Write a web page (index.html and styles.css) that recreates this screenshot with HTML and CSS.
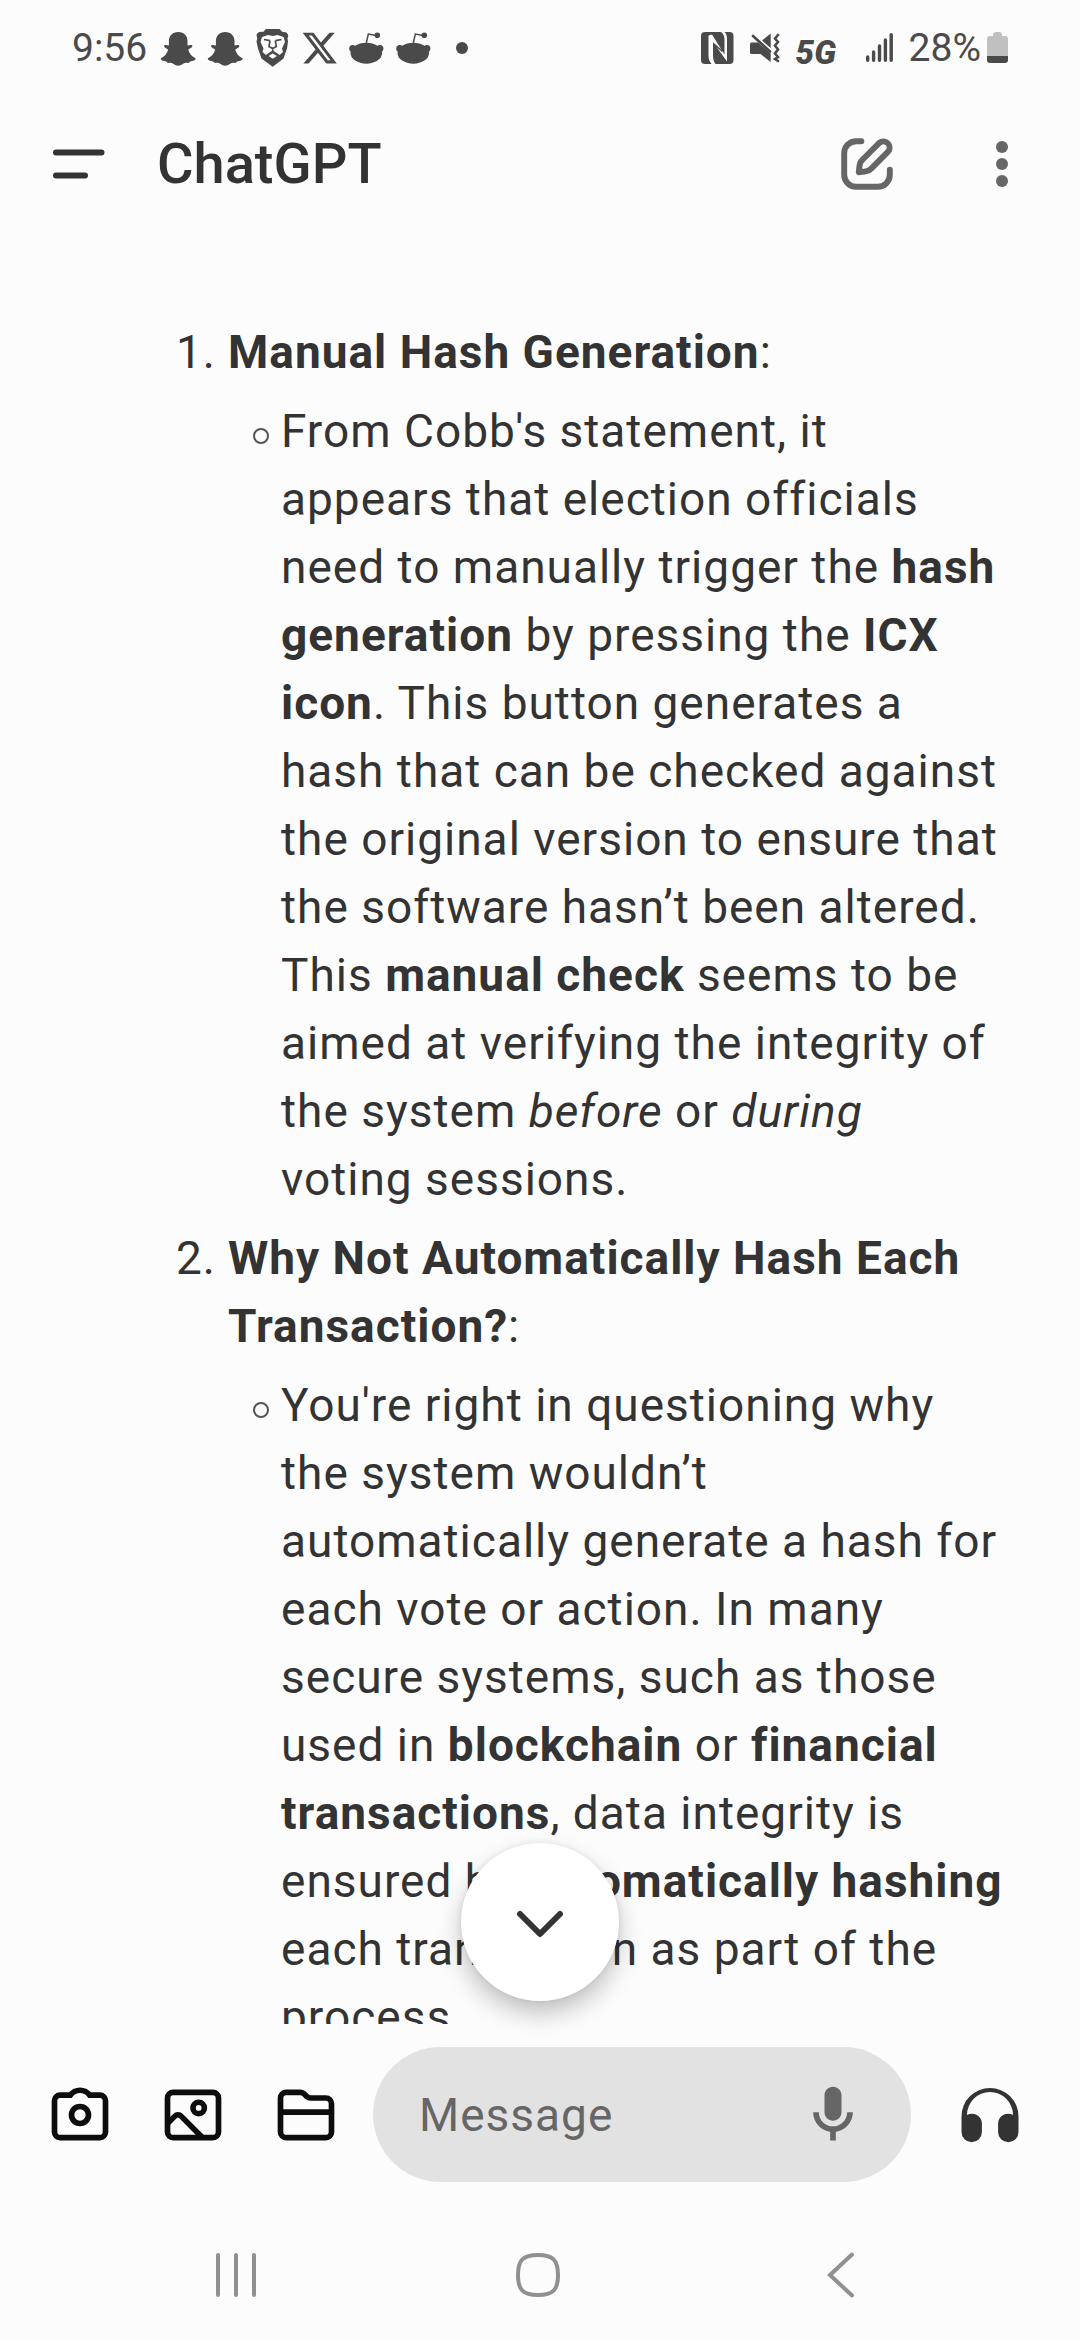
FILE: index.html
```html
<!DOCTYPE html>
<html lang="en">
<head>
<meta charset="utf-8">
<meta name="viewport" content="width=device-width, initial-scale=1">
<title>ChatGPT</title>
<link rel="stylesheet" href="styles.css">
</head>
<body class="screen">
  <div class="status">
    <div class="status-left">
      <span class="status-time">9:56</span>
      <svg class="note" viewBox="0 0 36 40" aria-hidden="true"><use href="#snap"/></svg>
      <svg class="note" viewBox="0 0 36 40" aria-hidden="true"><use href="#snap"/></svg>
      <svg class="note" viewBox="0 0 36 40" aria-hidden="true">
        <path fill="currentColor" d="M12 1h13.500l3 3c3-.5 5 .5 5.800 3.500l-.8 3 .5 3-1 7-3.500 10L18.700 38.700 7.500 30.500l-3.500-10-1.500-7 .8-3L2.500 7C3.500 4 6 3.500 9 4z"/>
        <path class="cut" d="M8 9l6-2 4.700 1L23.500 7l6 2 1.500 5-3 6.500 1 3.500-3.500 3-3.500-2.500-3.300-2-3.300 2L12 27l-3.500-3 1-3.500-3-6.500zM14.500 28l4.200-2.500L23 28l-4.300 2.800z"/>
        <path fill="none" stroke="currentColor" stroke-width="1.700" d="M10 11.500l6 1.200M27.500 11.500l-6 1.200M16 12.500l-1 6 3.700 2 3.600-2-1-6M18.700 20v4"/>
      </svg>
      <svg class="note" viewBox="0 0 36 40" aria-hidden="true"><path fill="currentColor" transform="translate(-.3 1.100) scale(1.580)" d="M18.244 2.250h3.308l-7.227 8.260 8.502 11.240H16.170l-5.214-6.817L4.990 21.750H1.680l7.730-8.835L1.254 2.250H8.080l4.713 6.231zm-1.161 17.520h1.833L7.084 4.126H5.117z"/></svg>
      <svg class="note" viewBox="0 0 36 40" aria-hidden="true"><use href="#reddit"/></svg>
      <svg class="note" viewBox="0 0 36 40" aria-hidden="true"><use href="#reddit"/></svg>
      <svg class="note" viewBox="0 0 36 40" aria-hidden="true"><circle cx="20" cy="20" r="6" fill="currentColor"/></svg>
    </div>
    <div class="status-right">
      <svg width="33" height="32" viewBox="0 0 33 32" aria-hidden="true">
        <rect width="32.500" height="32" rx="4" fill="currentColor"/>
        <path class="cut" d="M7.500 3.500l3.500-1 12.500 20V8c0-4-1-6-3.500-8h3.500c2 2 2.500 4 2.500 7v22.500L12 10v13c0 4 .5 6.500 2.500 9h-4c-2-2.500-3-5-3-8z"/>
        <path fill="none" stroke="currentColor" stroke-width="1.500" d="M13 12l8.500 7.500"/>
      </svg>
      <svg width="30" height="32" viewBox="0 0 30 32" aria-hidden="true">
        <path fill="currentColor" d="M1.500 10.500H8l12.700 11V30L10.500 22h-9Q0 22 0 20.500V12q0-1.500 1.500-1.500zM12 8.500L20.700 1.500V16z"/>
        <path fill="none" stroke="currentColor" stroke-width="2.600" stroke-linecap="round" d="M3 4l17 15.500M28 3l-3 3.500 3 3.500-3 3.500 3 4-3 4 3 3.500-3 2 3 2"/>
      </svg>
      <span class="status-net">5G</span>
      <svg width="27" height="32" viewBox="0 0 27 32" aria-hidden="true"><path fill="none" stroke="currentColor" stroke-width="3.400" stroke-linecap="round" d="M1.700 25v3.300M7.600 20v8.300M13.500 14v14.300M19.400 8v20.300M25.200 2.700v25.600"/></svg>
      <span class="status-battery">
        <span>28%</span>
        <svg width="21" height="32" viewBox="0 0 21 32" aria-hidden="true">
          <path fill="#c0c0c0" d="M6 3q0-3 3-3h3q3 0 3 3v1h3q3 0 3 3v17H0V7q0-3 3-3h3z"/>
          <path fill="currentColor" d="M0 24h21v4q0 3-3 3H3q-3 0-3-3z"/>
        </svg>
      </span>
    </div>
  </div>

  <header class="topbar">
    <button class="icon-btn" type="button" aria-label="Menu">
      <svg class="icon" viewBox="0 0 68 68"><path fill="none" stroke="currentColor" stroke-width="6" stroke-linecap="round" d="M11 22.500h45.500M11 45.500h29"/></svg>
    </button>
    <h1 class="title">ChatGPT</h1>
    <button class="icon-btn muted" type="button" aria-label="New chat">
      <svg class="icon" viewBox="0 0 24 24"><path fill="none" stroke="currentColor" stroke-width="2.100" stroke-linecap="round" stroke-linejoin="round" d="M10 3.950H8.200A4.250 4.250 0 0 0 3.950 8.200v7.600A4.250 4.250 0 0 0 8.200 20.050h7.600a4.250 4.250 0 0 0 4.250-4.250V14M9.100 14.900l.3-2.500a3 3 0 0 1 1-1.900l5.950-5.950a2.200 2.200 0 0 1 3.100 3.100L13.500 13.600a3 3 0 0 1-1.900 1z"/></svg>
    </button>
    <button class="icon-btn muted" type="button" aria-label="More options">
      <svg class="icon" viewBox="0 0 68 68"><g fill="currentColor"><circle cx="34" cy="17" r="6"/><circle cx="34" cy="34" r="6"/><circle cx="34" cy="51" r="6"/></g></svg>
    </button>
  </header>

  <main class="chat">
    <div class="scroll">
      <ol class="points">
        <li class="point">
          <p class="text"><strong>Manual Hash Generation</strong>:</p>
          <ul class="details">
            <li class="detail text">From Cobb's statement, it appears that election officials need to manually trigger the <strong>hash generation</strong> by pressing the <strong>ICX icon</strong>. This button generates a hash that can be checked against the original version to ensure that the software hasn’t been altered. This <strong>manual check</strong> seems to be aimed at verifying the integrity of the system <em>before</em> or <em>during</em> voting sessions.</li>
          </ul>
        </li>
        <li class="point">
          <p class="text"><strong>Why Not Automatically Hash Each Transaction?</strong>:</p>
          <ul class="details">
            <li class="detail text">You're right in questioning why the system wouldn’t<br>automatically generate a hash for each vote or action. In many secure systems, such as those used in <strong>blockchain</strong> or <strong>financial transactions</strong>, data integrity is ensured by <strong>automatically hashing</strong> each transaction as part of the process.</li>
          </ul>
        </li>
      </ol>
    </div>
    <button class="jump" type="button" aria-label="Scroll to bottom">
      <svg class="icon" viewBox="0 0 68 68"><path fill="none" stroke="currentColor" stroke-width="6" stroke-linecap="round" stroke-linejoin="round" d="M14 26l20 20 20-20"/></svg>
    </button>
  </main>

  <form class="composer">
    <div class="attach">
      <button class="icon-btn" type="button" aria-label="Camera">
        <svg class="icon line" viewBox="0 0 24 24"><path d="M5 5h3.600a4.200 4.200 0 0 1 6.800 0H19a2 2 0 0 1 2 2v11a2 2 0 0 1-2 2H5a2 2 0 0 1-2-2V7a2 2 0 0 1 2-2z"/><circle cx="12" cy="12" r="3"/></svg>
      </button>
      <button class="icon-btn" type="button" aria-label="Photo">
        <svg class="icon line" viewBox="0 0 24 24"><rect x="3" y="4" width="18" height="16" rx="2"/><circle cx="14" cy="9.500" r="2"/><path d="M3 15l2.600-2.600a1.500 1.500 0 0 1 2.200 0L15.400 20"/></svg>
      </button>
      <button class="icon-btn" type="button" aria-label="File">
        <svg class="icon line" viewBox="0 0 24 24"><path d="M5 4h5a2 2 0 0 1 1.400.6l.9.9a2 2 0 0 0 1.400.5H19a2 2 0 0 1 2 2v10a2 2 0 0 1-2 2H5a2 2 0 0 1-2-2V6a2 2 0 0 1 2-2zM3 11h18"/></svg>
      </button>
    </div>
    <div class="field">
      <input class="input" type="text" placeholder="Message" aria-label="Message">
      <button class="icon-btn muted" type="button" aria-label="Voice input">
        <svg class="icon" viewBox="0 0 24 24"><path fill="currentColor" d="M12 14c1.660 0 3-1.340 3-3V5c0-1.660-1.340-3-3-3S9 3.340 9 5v6c0 1.660 1.340 3 3 3zM17 11c0 2.760-2.240 5-5 5s-5-2.240-5-5H5c0 3.530 2.610 6.430 6 6.920V21h2v-3.080c3.390-.49 6-3.390 6-6.920z"/></svg>
      </button>
    </div>
    <button class="icon-btn" type="button" aria-label="Voice mode">
      <svg class="icon" viewBox="0 0 68 68"><path fill="currentColor" d="M5.500 35.500a28.500 28.500 0 0 1 57 0V51a10.200 10.200 0 0 1-20.400 0V42.500a10 10 0 0 1 14.900-8.500 23 23 0 0 0-46 0 10 10 0 0 1 14.900 8.500V51a10.200 10.200 0 0 1-20.400 0z"/></svg>
    </button>
  </form>

  <nav class="navbar" aria-label="System">
    <button class="nav-btn" type="button" aria-label="Recents"><svg class="nav-icon" viewBox="0 0 48 48"><path d="M6 4v40M24 4v40M42 4v40"/></svg></button>
    <button class="nav-btn" type="button" aria-label="Home"><svg class="nav-icon" viewBox="0 0 48 48"><path d="M24 4c15 0 20 5 20 20s-5 20-20 20S4 39 4 24 9 4 24 4z"/></svg></button>
    <button class="nav-btn" type="button" aria-label="Back"><svg class="nav-icon" viewBox="0 0 48 48"><path d="M35 3.500L13 24l22 20.500"/></svg></button>
  </nav>

  <svg class="defs" width="0" height="0" aria-hidden="true">
    <symbol id="snap" viewBox="0 0 36 40"><path fill="currentColor" d="M18.200 4c6 0 9.300 4 9.300 9v4.500c1.500-.3 3.500-1 4.700 0 .8 1.200-1 2.500-4 4.200 1.300 4 3.800 6.800 7.300 8.600.6 1.700-1.500 2.700-5.500 3.200-.5 1.500-1.500 1.500-4 1.300-3 0-4 3-7.800 3s-4.800-3-7.800-3c-2.500.2-3.500.2-4-1.300-4-.5-6.100-1.500-5.500-3.200 3.500-1.800 6-4.600 7.300-8.600-3-1.700-4.800-3-4-4.200 1.200-1 3.200-.3 4.700 0V13c0-5 3.300-9 9.300-9z"/></symbol>
    <symbol id="reddit" viewBox="0 0 36 40"><g fill="currentColor"><ellipse cx="18.300" cy="25.200" rx="15.700" ry="10.500"/><circle cx="4.700" cy="20.500" r="3.500"/><circle cx="31.900" cy="20.500" r="3.500"/><circle cx="29.300" cy="7.300" r="2.800"/></g><path fill="none" stroke="currentColor" stroke-width="1.500" d="M18.300 15l2-9 8 1.500"/></symbol>
  </svg>
</body>
</html>
```
FILE: styles.css
```css
* {
  box-sizing: border-box;
}

.screen {
  margin: 0;
  height: 100vh;
  display: flex;
  flex-direction: column;
  background: #fcfcfc;
  color: #333;
  font-family: Roboto, "Liberation Sans", sans-serif;
  font-size: 46px;
}

.defs {
  position: absolute;
}

button {
  padding: 0;
  border: 0;
  background: none;
  color: inherit;
}

svg {
  display: block;
  flex: none;
}

/* Status bar */
.status {
  flex: none;
  height: 96px;
  padding: 0 72px;
  display: flex;
  align-items: center;
  justify-content: space-between;
  color: #4a4a4a;
  font-size: 39px;
}

.status-left {
  display: flex;
  align-items: center;
  gap: 11px;
}

.status-time {
  margin-right: 2px;
}

.note {
  width: 36px;
  height: 40px;
}

.cut {
  fill: #fcfcfc;
}

.status-right {
  display: flex;
  align-items: center;
  gap: 16px;
}

.status-net {
  width: 54px;
  padding-top: 8px;
  font-size: 33px;
  font-weight: 900;
  font-style: italic;
}

.status-battery {
  display: flex;
  align-items: center;
  gap: 6px;
}

/* App bar */
.topbar {
  flex: none;
  height: 136px;
  padding: 0 44px 0 45px;
  display: flex;
  align-items: center;
}

.icon-btn {
  flex: none;
  width: 68px;
  height: 68px;
}

.icon {
  width: 68px;
  height: 68px;
}

.muted {
  color: #666;
}

.title {
  flex: 1;
  margin: 0 0 0 44px;
  font-size: 56px;
  font-weight: 500;
}

.topbar .muted + .muted {
  margin-left: 67px;
}

/* Conversation */
.chat {
  position: relative;
  flex: 1;
  min-height: 0;
}

.scroll {
  height: 100%;
  padding: 86px 75px 0 176px;
  overflow: hidden;
}

.text {
  margin: 0;
  line-height: 68px;
  letter-spacing: 1px;
}

.points,
.details {
  margin: 0;
  padding: 0;
  list-style: none;
  display: grid;
  gap: 11px;
}

.points {
  counter-reset: point;
}

.point {
  display: grid;
  grid-template-columns: 52px 1fr;
  row-gap: 11px;
  counter-increment: point;
}

.point::before {
  content: counter(point) ".";
  line-height: 68px;
  letter-spacing: 1px;
}

.details {
  grid-column: 2;
}

.detail {
  position: relative;
  padding-left: 53px;
}

.detail::before {
  content: "";
  position: absolute;
  left: 25px;
  top: 31px;
  width: 12px;
  height: 12px;
  border: 2px solid #555;
  border-radius: 50%;
}

.jump {
  position: absolute;
  left: calc(50% - 79px);
  bottom: 23px;
  width: 158px;
  height: 158px;
  display: grid;
  place-items: center;
  border-radius: 50%;
  background: #fff;
  box-shadow: 0 12px 24px rgba(0, 0, 0, 0.24), 0 0 6px rgba(0, 0, 0, 0.08);
}

/* Composer */
.composer {
  flex: none;
  padding: 23px 56px 28px 46px;
  display: flex;
  align-items: center;
  gap: 45px;
}

.attach {
  display: flex;
  gap: 45px;
  margin-right: -12px;
  color: #0d0d0d;
}

.line {
  fill: none;
  stroke: currentColor;
  stroke-width: 2;
}

.field {
  flex: 1;
  min-width: 0;
  height: 135px;
  padding: 0 44px 0 46px;
  display: flex;
  align-items: center;
  border-radius: 68px;
  background: #e2e2e2;
}

.input {
  flex: 1;
  min-width: 0;
  height: 68px;
  padding: 0;
  border: 0;
  outline: 0;
  background: none;
  color: inherit;
  font: inherit;
  letter-spacing: 1px;
}

.input::placeholder {
  color: #666;
  opacity: 1;
}

/* System navigation */
.navbar {
  flex: none;
  height: 130px;
  padding: 0 88px 0 85px;
  display: grid;
  grid-template-columns: repeat(3, 1fr);
}

.nav-btn {
  display: grid;
  place-items: center;
}

.nav-icon {
  width: 48px;
  height: 48px;
  fill: none;
  stroke: #909090;
  stroke-width: 4;
  stroke-linecap: round;
}
```
